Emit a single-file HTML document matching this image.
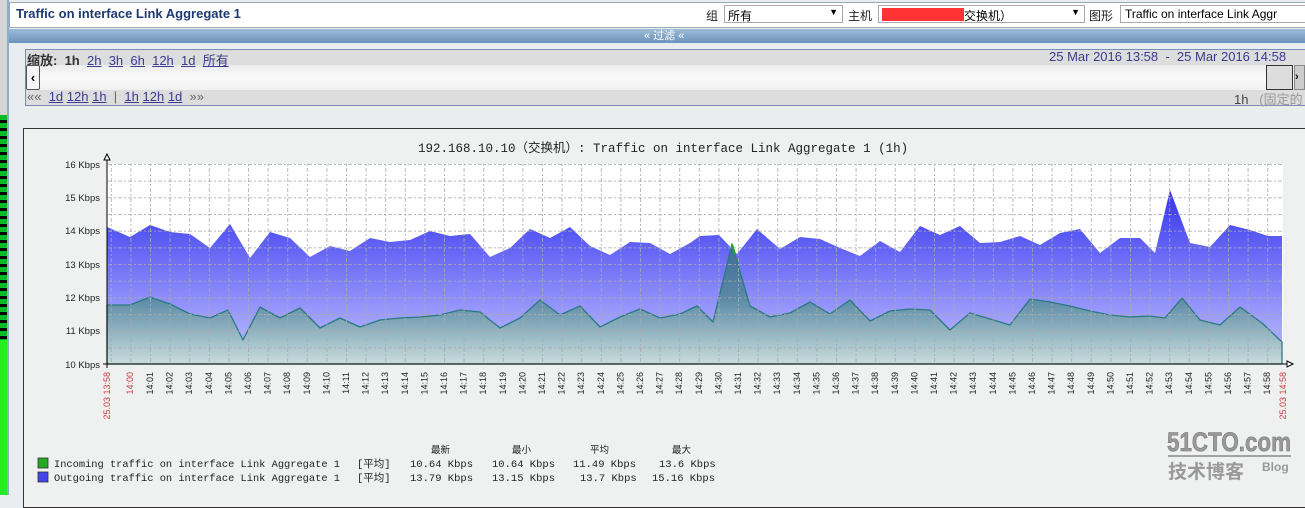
<!DOCTYPE html>
<html><head><meta charset="utf-8"><style>
*{margin:0;padding:0;box-sizing:border-box}
body{width:1305px;height:495px;overflow:hidden;background:#e9edef;font-family:"Liberation Sans","Noto Sans CJK SC",sans-serif;position:relative}
.abs{position:absolute}
a{color:#3b3b8f;text-decoration:underline}
</style></head><body>
<div class="abs" style="left:0;top:0;width:7px;height:115px;background:#d4d4d4"></div>
<div class="abs" style="left:0;top:115px;width:7px;height:225px;background:#0a1a0a;background-image:repeating-linear-gradient(180deg,#0b2 0 5px,#000 5px 8px)"></div>
<div class="abs" style="left:0;top:340px;width:7px;height:155px;background:#22ee22"></div>
<div class="abs" style="left:7px;top:0;width:2px;height:495px;background:#8aaed0"></div>
<div class="abs" style="left:9px;top:2px;width:1296px;height:26px;background:#fff;border:1px solid #9ab;border-right:none"></div>
<div class="abs" style="left:16px;top:6px;font-size:13px;font-weight:bold;color:#1e3a6e">Traffic on interface Link Aggregate 1</div>
<div class="abs" style="left:706px;top:7px;font-size:12px;color:#222">组</div>
<div class="abs" style="left:724px;top:5px;width:119px;height:18px;border:1px solid #aaa;background:#fff;font-size:12px;padding:1px 3px">所有<span style="position:absolute;right:4px;top:1px;font-size:9px">▼</span></div>
<div class="abs" style="left:848px;top:7px;font-size:12px;color:#222">主机</div>
<div class="abs" style="left:878px;top:5px;width:207px;height:18px;border:1px solid #aaa;background:#fff;font-size:12px;padding:1px 3px"><span style="position:absolute;left:3px;top:2px;width:82px;height:13px;background:#f33"></span><span style="position:absolute;left:85px;top:1px">交换机）</span><span style="position:absolute;right:4px;top:1px;font-size:9px">▼</span></div>
<div class="abs" style="left:1089px;top:7px;font-size:12px;color:#222">图形</div>
<div class="abs" style="left:1120px;top:5px;width:190px;height:18px;border:1px solid #aaa;background:#fff;font-size:12px;padding:1px 4px;white-space:nowrap;overflow:hidden">Traffic on interface Link Aggr</div>
<div class="abs" style="left:9px;top:29px;width:1296px;height:14px;background:linear-gradient(#9dbbd6,#6b92ba)"></div>
<div class="abs" style="left:644px;top:29px;font-size:11px;color:#fff;line-height:14px">« 过滤 «</div>
<div class="abs" style="left:25px;top:49px;width:1290px;height:57px;border:1px solid #7b8fb4;background:#ddd"></div>
<div class="abs" style="left:26px;top:65px;width:1280px;height:25px;background:linear-gradient(#ececec,#fafafa,#f0f0f0)"></div>
<div class="abs" style="left:27px;top:50px;font-size:13px;color:#333"><b>缩放:</b> &nbsp;<b style="color:#333">1h</b> &nbsp;<a>2h</a> &nbsp;<a>3h</a> &nbsp;<a>6h</a> &nbsp;<a>12h</a> &nbsp;<a>1d</a> &nbsp;<a>所有</a></div>
<div class="abs" style="left:26px;top:65px;width:14px;height:25px;border:1px solid #555;border-radius:2px;background:#f6f6f6;font-size:13px;font-weight:bold;text-align:center;line-height:23px">‹</div>
<div class="abs" style="left:27px;top:89px;font-size:13px;color:#666">«« &nbsp;<a>1d</a> <a>12h</a> <a>1h</a> &nbsp;| &nbsp;<a>1h</a> <a>12h</a> <a>1d</a> &nbsp;»»</div>
<div class="abs" style="left:1049px;top:49px;font-size:13px;color:#3b3b8f;white-space:nowrap">25 Mar 2016 13:58 &nbsp;- &nbsp;25 Mar 2016 14:58</div>
<div class="abs" style="left:1266px;top:65px;width:27px;height:25px;border:1px solid #333;background:#ddd"></div>
<div class="abs" style="left:1294px;top:65px;width:11px;height:25px;border:1px solid #888;background:#ccc;font-size:11px;font-weight:bold;line-height:23px">›</div>
<div class="abs" style="left:1234px;top:89px;font-size:13px;color:#444;white-space:nowrap">1h &nbsp;&nbsp;<span style="color:#999">(固定的</span></div>
<div class="abs" style="left:23px;top:128px;width:1290px;height:380px;border:1px solid #333;background:#eff0f0"></div>
<svg class="abs" style="left:0;top:0" width="1305" height="495" font-family="Liberation Sans, sans-serif">
<defs>
<linearGradient id="go" gradientUnits="userSpaceOnUse" x1="0" y1="190" x2="0" y2="330"><stop offset="0" stop-color="#3333ee"/><stop offset="1" stop-color="#a8a8ff"/></linearGradient>
<linearGradient id="gi" gradientUnits="userSpaceOnUse" x1="0" y1="245" x2="0" y2="364"><stop offset="0" stop-color="#3f6a9a"/><stop offset="0.45" stop-color="#5b8aa6"/><stop offset="1" stop-color="#c8dcdc"/></linearGradient>
<pattern id="gv" x="150" y="0" width="19.6" height="10" patternUnits="userSpaceOnUse"><line x1="0.5" y1="0" x2="0.5" y2="10" stroke="#aaa" stroke-dasharray="2,2"/></pattern>
<pattern id="gh" x="0" y="164" width="10" height="16.667" patternUnits="userSpaceOnUse"><line x1="0" y1="0.5" x2="10" y2="0.5" stroke="#aaa" stroke-dasharray="2,2"/></pattern>
</defs>
<text x="418" y="152" font-size="12.5" fill="#222" font-family="Liberation Mono, Noto Sans CJK SC, monospace">192.168.10.10（交换机）: Traffic on interface Link Aggregate 1 (1h)</text>
<rect x="107" y="164" width="1176" height="200" fill="#fff"/>
<polygon fill="url(#go)" points="107,227 130,237 150,225 170,232 190,234 210,248 230,224 250,258 270,232 290,238 310,257 330,246 350,251 370,238 390,242 410,240 430,231 450,236 470,234 490,257 510,248 530,229 550,238 570,227 590,246 610,255 630,242 650,243 670,254 690,243 700,236 719,235 737,254 757,229 780,249 800,237 820,239 840,248 860,256 880,241 900,252 920,226 940,235 960,226 980,243 1000,242 1020,236 1040,245 1060,233 1080,229 1100,253 1120,238 1140,238 1155,253 1170,190 1190,243 1210,247 1230,225 1250,230 1268,236 1282,236 1282,364 107,364"/>
<polygon fill="url(#gi)" stroke="#2a7a80" stroke-width="1.3" stroke-linejoin="round" points="107,305 130,305 150,297 170,304 190,314 210,318 228,310 243,340 260,307 280,318 300,308 320,328 340,318 360,327 380,320 400,318 420,317 440,315 460,310 480,312 500,328 520,318 540,300 560,315 580,306 600,327 620,317 640,309 660,318 680,314 697,306 713,322 732,244 750,306 770,317 790,313 810,302 830,314 850,300 870,321 890,311 910,309 930,310 950,330 970,313 990,319 1010,325 1030,299 1050,302 1070,306 1090,311 1110,315 1130,317 1150,316 1165,318 1182,298 1200,320 1220,325 1240,307 1262,323 1282,342 1282,364 107,364"/>
<line x1="732" y1="244" x2="735" y2="254" stroke="#22aa22" stroke-width="2"/>
<rect x="107" y="164" width="1176" height="200" fill="url(#gv)" opacity="0.8"/>
<rect x="107" y="164" width="1176" height="200" fill="url(#gh)" opacity="0.8"/>
<line x1="107" y1="158" x2="107" y2="368" stroke="#000"/>
<line x1="103" y1="364" x2="1290" y2="364" stroke="#000"/>
<path d="M104,160 L107,154 L110,160 Z" fill="#fff" stroke="#000"/>
<path d="M1287,361 L1293,364 L1287,367 Z" fill="#fff" stroke="#000"/>
<g font-size="9.5" fill="#222" text-anchor="end">
<text x="100" y="168">16 Kbps</text><text x="100" y="201">15 Kbps</text><text x="100" y="234">14 Kbps</text><text x="100" y="268">13 Kbps</text><text x="100" y="301">12 Kbps</text><text x="100" y="334">11 Kbps</text><text x="100" y="368">10 Kbps</text>
</g>
<g font-size="9" fill="#222" text-anchor="end">
<text transform="translate(110,372) rotate(-90)" fill="#c04040">25.03 13:58</text>
<text transform="translate(133,372) rotate(-90)" fill="#c04040">14:00</text>
<text transform="translate(1286,372) rotate(-90)" fill="#c04040">25.03 14:58</text>
<text transform="translate(153,372) rotate(-90)">14:01</text><text transform="translate(172.6,372) rotate(-90)">14:02</text><text transform="translate(192.2,372) rotate(-90)">14:03</text><text transform="translate(211.8,372) rotate(-90)">14:04</text><text transform="translate(231.4,372) rotate(-90)">14:05</text><text transform="translate(251,372) rotate(-90)">14:06</text><text transform="translate(270.6,372) rotate(-90)">14:07</text><text transform="translate(290.2,372) rotate(-90)">14:08</text><text transform="translate(309.8,372) rotate(-90)">14:09</text><text transform="translate(329.4,372) rotate(-90)">14:10</text><text transform="translate(349,372) rotate(-90)">14:11</text><text transform="translate(368.6,372) rotate(-90)">14:12</text><text transform="translate(388.2,372) rotate(-90)">14:13</text><text transform="translate(407.8,372) rotate(-90)">14:14</text><text transform="translate(427.4,372) rotate(-90)">14:15</text><text transform="translate(447,372) rotate(-90)">14:16</text><text transform="translate(466.6,372) rotate(-90)">14:17</text><text transform="translate(486.2,372) rotate(-90)">14:18</text><text transform="translate(505.8,372) rotate(-90)">14:19</text><text transform="translate(525.4,372) rotate(-90)">14:20</text><text transform="translate(545,372) rotate(-90)">14:21</text><text transform="translate(564.6,372) rotate(-90)">14:22</text><text transform="translate(584.2,372) rotate(-90)">14:23</text><text transform="translate(603.8,372) rotate(-90)">14:24</text><text transform="translate(623.4,372) rotate(-90)">14:25</text><text transform="translate(643,372) rotate(-90)">14:26</text><text transform="translate(662.6,372) rotate(-90)">14:27</text><text transform="translate(682.2,372) rotate(-90)">14:28</text><text transform="translate(701.8,372) rotate(-90)">14:29</text><text transform="translate(721.4,372) rotate(-90)">14:30</text><text transform="translate(741,372) rotate(-90)">14:31</text><text transform="translate(760.6,372) rotate(-90)">14:32</text><text transform="translate(780.2,372) rotate(-90)">14:33</text><text transform="translate(799.8,372) rotate(-90)">14:34</text><text transform="translate(819.4,372) rotate(-90)">14:35</text><text transform="translate(839,372) rotate(-90)">14:36</text><text transform="translate(858.6,372) rotate(-90)">14:37</text><text transform="translate(878.2,372) rotate(-90)">14:38</text><text transform="translate(897.8,372) rotate(-90)">14:39</text><text transform="translate(917.4,372) rotate(-90)">14:40</text><text transform="translate(937,372) rotate(-90)">14:41</text><text transform="translate(956.6,372) rotate(-90)">14:42</text><text transform="translate(976.2,372) rotate(-90)">14:43</text><text transform="translate(995.8,372) rotate(-90)">14:44</text><text transform="translate(1015.4,372) rotate(-90)">14:45</text><text transform="translate(1035,372) rotate(-90)">14:46</text><text transform="translate(1054.6,372) rotate(-90)">14:47</text><text transform="translate(1074.2,372) rotate(-90)">14:48</text><text transform="translate(1093.8,372) rotate(-90)">14:49</text><text transform="translate(1113.4,372) rotate(-90)">14:50</text><text transform="translate(1133,372) rotate(-90)">14:51</text><text transform="translate(1152.6,372) rotate(-90)">14:52</text><text transform="translate(1172.2,372) rotate(-90)">14:53</text><text transform="translate(1191.8,372) rotate(-90)">14:54</text><text transform="translate(1211.4,372) rotate(-90)">14:55</text><text transform="translate(1231,372) rotate(-90)">14:56</text><text transform="translate(1250.6,372) rotate(-90)">14:57</text><text transform="translate(1270.2,372) rotate(-90)">14:58</text>
</g>
<g font-size="10.5" fill="#222" font-family="Liberation Mono, Noto Sans CJK SC, monospace">
<text x="431" y="453" font-size="9.5">最新</text><text x="512" y="453" font-size="9.5">最小</text><text x="590" y="453" font-size="9.5">平均</text><text x="672" y="453" font-size="9.5">最大</text>
<rect x="38" y="458" width="10" height="10" fill="#22aa22" stroke="#333" stroke-width="0.8"/>
<rect x="38" y="472" width="10" height="10" fill="#4444ee" stroke="#333" stroke-width="0.8"/>
<text x="54" y="467" textLength="286" lengthAdjust="spacingAndGlyphs">Incoming traffic on interface Link Aggregate 1</text>
<text x="54" y="481" textLength="286" lengthAdjust="spacingAndGlyphs">Outgoing traffic on interface Link Aggregate 1</text>
<text x="357" y="467">[平均]</text><text x="357" y="481">[平均]</text>
<text x="410" y="467">10.64 Kbps</text><text x="492" y="467">10.64 Kbps</text><text x="573" y="467">11.49 Kbps</text><text x="659" y="467">13.6 Kbps</text>
<text x="410" y="481">13.79 Kbps</text><text x="492" y="481">13.15 Kbps</text><text x="580" y="481">13.7 Kbps</text><text x="652" y="481">15.16 Kbps</text>
</g>
<text x="1167" y="451" font-size="27" font-weight="bold" fill="#999" stroke="#777" stroke-width="0.6" textLength="124" lengthAdjust="spacingAndGlyphs">51CTO.com</text>
<line x1="1168" y1="456" x2="1291" y2="456" stroke="#888" stroke-width="1.5"/>
<text x="1168" y="478" font-size="19" font-weight="bold" fill="#999" font-family="Noto Sans CJK SC, sans-serif">技术博客</text>
<text x="1262" y="471" font-size="12" font-weight="bold" fill="#999">Blog</text>
</svg>
</body></html>
